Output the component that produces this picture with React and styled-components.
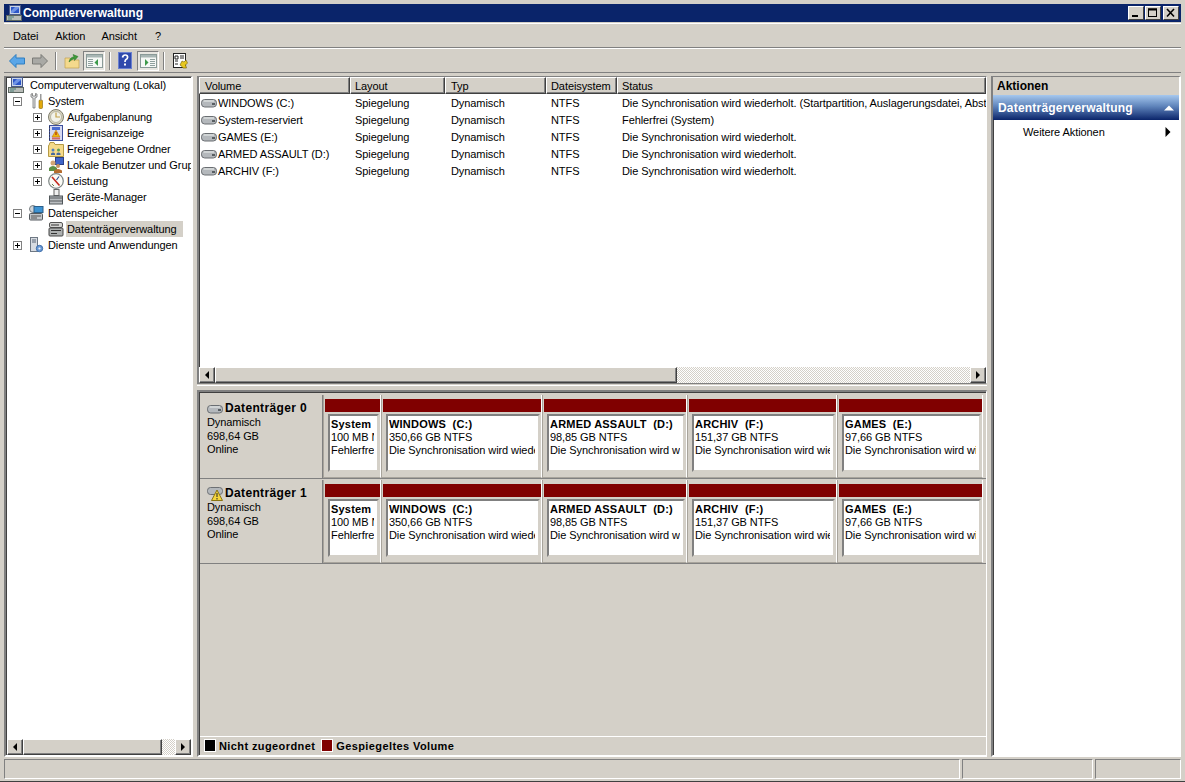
import React from 'react';
import styled, { createGlobalStyle } from 'styled-components';

const GlobalStyle = createGlobalStyle`
  html, body { margin: 0; padding: 0; background: #d4d0c8; }
  body { font-family: "Liberation Sans", Arial, sans-serif; font-size: 11px; letter-spacing: -0.08px; color: #000; }
`;

const gray = '#d4d0c8';

const Frame = styled.div`
  width: 1185px;
  height: 782px;
  box-sizing: border-box;
  padding: 4px 4px 2px;
  display: flex;
  flex-direction: column;
  background: ${gray};
  border-bottom: 1px solid #404040;
  overflow: hidden;
`;

const TitleBar = styled.div`
  height: 18px;
  flex: none;
  display: flex;
  align-items: center;
  padding: 0 2px;
  background: #0a246a;
  color: #fff;
  font-weight: bold;
  font-size: 12px;
  letter-spacing: 0;
  gap: 1px;
`;

const TitleText = styled.span`
  flex: 1;
`;

const WinButton = styled.button`
  width: 16px;
  height: 14px;
  padding: 0;
  margin-left: ${({ $gap }) => $gap || 0}px;
  border: 1px solid;
  border-color: #fff #404040 #404040 #fff;
  background: ${gray};
  display: flex;
  align-items: center;
  justify-content: center;
`;

const Bar = styled.div`
  height: ${({ $h }) => $h}px;
  flex: none;
  box-sizing: border-box;
  display: flex;
  align-items: center;
  border-top: 1px solid #fff;
  border-bottom: 1px solid #808080;
`;

const MenuBar = styled(Bar)`
  margin-top: 1px;
  padding-left: 1px;
`;

const MenuItem = styled.span`
  padding: 0 8px;
  margin-right: ${({ $mr }) => $mr || 0}px;
`;

const ToolBar = styled(Bar)`
  padding-left: 5px;
`;

const ToolButton = styled.div`
  width: ${({ $w }) => $w || 16}px;
  height: 20px;
  flex: none;
  display: flex;
  align-items: center;
  justify-content: center;
  margin-right: ${({ $mr }) => $mr || 0}px;
  box-sizing: border-box;
  ${({ $on }) => $on && `
    background: #e8e6e1;
    border: 1px solid;
    border-color: #808080 #fff #fff #808080;
  `}
`;

const ToolSep = styled.div`
  width: 2px;
  height: 18px;
  flex: none;
  margin: 0 ${({ $r }) => $r || 7}px 0 ${({ $l }) => $l || 7}px;
  border-left: 1px solid #808080;
  border-right: 1px solid #fff;
  box-sizing: border-box;
`;

const Main = styled.div`
  flex: 1;
  min-height: 0;
  display: flex;
  gap: 4px;
  margin-top: 3px;
`;

const Sunken = styled.div`
  box-sizing: border-box;
  border: 2px solid;
  border-top-width: 1px;
  border-color: #808080 #fff #fff #808080;
  box-shadow: inset 1px 1px 0 #404040;
`;

const TreePanel = styled(Sunken)`
  width: 189px;
  flex: none;
  background: #fff;
  display: flex;
  flex-direction: column;
  padding: 0 0 0 1px;
`;

const Tree = styled.div`
  flex: 1;
  min-height: 0;
  overflow: hidden;
`;

const TreeRow = styled.div`
  height: 16px;
  display: flex;
  align-items: center;
  white-space: nowrap;
  padding-left: ${({ $level }) => ($level === 0 ? 1 : $level === 1 ? 6 : 26)}px;
`;

const Expander = styled.span`
  width: 9px;
  height: 9px;
  flex: none;
  box-sizing: border-box;
  border: 1px solid #808080;
  background: #fff;
  display: flex;
  align-items: center;
  justify-content: center;
  margin-right: 6px;
  visibility: ${({ $hidden }) => ($hidden ? 'hidden' : 'visible')};
`;

const TreeIcon = styled.span`
  width: 16px;
  height: 16px;
  flex: none;
  display: block;
`;

const TreeLabel = styled.span`
  margin-left: ${({ $level }) => ($level === 0 ? 5 : $level === 1 ? 3 : 2)}px;
  padding: ${({ $selected }) => ($selected ? '0 6px 0 1px' : '0 2px 0 1px')};
  line-height: 16px;
  background: ${({ $selected }) => ($selected ? gray : 'transparent')};
`;

const ScrollBar = styled.div`
  height: 16px;
  flex: none;
  display: flex;
  background: repeating-conic-gradient(#fff 0 25%, ${gray} 0 50%) 0 0 / 2px 2px;
`;

const ScrollBtn = styled.div`
  width: ${({ $w }) => $w || 16}px;
  flex: none;
  box-sizing: border-box;
  background: ${gray};
  border: 1px solid;
  border-color: #fff #404040 #404040 #fff;
  box-shadow: inset -1px -1px 0 #808080;
  display: flex;
  align-items: center;
  justify-content: center;
`;

const ScrollGap = styled.div`
  flex: 1;
`;

const Center = styled.div`
  flex: 1;
  min-width: 0;
  display: flex;
  flex-direction: column;
  gap: 6px;
`;

const ListPane = styled(Sunken)`
  height: 308px;
  flex: none;
  background: #fff;
  display: flex;
  flex-direction: column;
  border-right-width: 1px;
  border-bottom: 1px solid #808080;
  box-shadow: inset 1px 1px 0 #404040, 0 1px 0 ${gray}, 0 2px 0 #fff;
`;

const ListHead = styled.div`
  height: 17px;
  flex: none;
  display: flex;
  background: ${gray};
`;

const HeadCell = styled.div`
  box-sizing: border-box;
  width: ${({ $w }) => $w}px;
  flex: ${({ $grow }) => ($grow ? 1 : 'none')};
  padding-left: ${({ $pl }) => $pl}px;
  line-height: 16px;
  border: 1px solid;
  border-color: #fff #404040 #404040 #fff;
  box-shadow: inset -1px -1px 0 #808080;
`;

const ListBody = styled.div`
  flex: 1;
  min-height: 0;
  overflow: hidden;
`;

const ListRow = styled.div`
  height: 17px;
  display: flex;
  align-items: center;
  white-space: nowrap;
`;

const ListCell = styled.div`
  width: ${({ $w }) => $w}px;
  flex: ${({ $grow }) => ($grow ? 1 : 'none')};
  min-width: 0;
  overflow: hidden;
  box-sizing: border-box;
  padding-left: ${({ $pl }) => $pl || 5}px;
  display: flex;
  align-items: center;
  gap: 1px;
`;

const DiskPane = styled(Sunken)`
  flex: 1;
  min-height: 0;
  background: ${gray};
  display: flex;
  flex-direction: column;
  padding: 3px 0 0 1px;
  border-top-width: 2px;
  border-right-width: 1px;
`;

const DiskRow = styled.div`
  height: 83px;
  flex: none;
  display: flex;
  margin-bottom: 1px;
  border-bottom: 1px solid #808080;
  box-sizing: content-box;
`;

const DiskLabel = styled.div`
  width: 123px;
  flex: none;
  box-sizing: border-box;
  padding: 7px 0 0 7px;
  border-right: 1px solid #808080;
  line-height: 13.5px;
`;

const DiskTitle = styled.div`
  display: flex;
  align-items: center;
  gap: 2px;
  height: 14px;
  font-weight: bold;
  font-size: 12px;
  letter-spacing: 0.35px;
`;

const DiskVolumes = styled.div`
  flex: 1;
  display: flex;
`;

const Volume = styled.div`
  width: ${({ $w }) => $w}px;
  flex: none;
  box-sizing: border-box;
  padding: 4px 0 5px 1px;
  display: flex;
  flex-direction: column;
  border-right: 1px solid #fff;
  border-left: 1px solid #a8a49c;
  border-bottom: 1px solid #a8a49c;
`;

const VolumeBar = styled.div`
  height: 13px;
  flex: none;
  background: #800000;
`;

const VolumeBody = styled.div`
  flex: 1;
  margin: 2px 1px 0 3px;
  box-sizing: border-box;
  background: #fff;
  border: 2px solid;
  border-color: #808080 #d4d0c8 #d4d0c8 #808080;
  padding: 2px 3px 0 1px;
`;

const VolumeText = styled.div`
  overflow: hidden;
  white-space: nowrap;
  line-height: 13px;
`;

const VolumeName = styled.div`
  font-weight: bold;
  letter-spacing: 0.2px;
  white-space: pre;
`;

const Legend = styled.div`
  margin-top: auto;
  height: 19px;
  flex: none;
  box-sizing: border-box;
  display: flex;
  align-items: center;
  padding: 0 0 1px 4px;
  font-weight: bold;
  letter-spacing: 0.4px;
  border-top: 1px solid #fff;
`;

const Swatch = styled.span`
  width: 12px;
  height: 13px;
  flex: none;
  box-sizing: border-box;
  background: ${({ $color }) => $color};
  border: 1px solid #fff;
  margin-right: 3px;
`;

const LegendText = styled.span`
  margin-right: 6px;
`;

const ActionsPanel = styled(Sunken)`
  width: 190px;
  flex: none;
  background: #fff;
  display: flex;
  flex-direction: column;
`;

const ActionsHead = styled.div`
  height: 18px;
  flex: none;
  background: ${gray};
  font-weight: bold;
  font-size: 12px;
  letter-spacing: 0;
  padding-left: 4px;
  box-sizing: border-box;
  line-height: 18px;
`;

const ActionsGroup = styled.div`
  height: 25px;
  flex: none;
  display: flex;
  align-items: center;
  justify-content: space-between;
  padding: 0 5px;
  background: linear-gradient(#a6c8ee, #5f84bb 45%, #0a246a);
  color: #fff;
  font-weight: bold;
  font-size: 12px;
  letter-spacing: 0.2px;
`;

const ActionItem = styled.div`
  height: 24px;
  flex: none;
  display: flex;
  align-items: center;
  justify-content: space-between;
  padding: 0 6px 0 30px;
`;

const StatusBar = styled.div`
  height: 20px;
  flex: none;
  margin-top: 2px;
  display: flex;
  gap: 2px;
`;

const StatusCell = styled.div`
  width: ${({ $w }) => $w}px;
  flex: ${({ $grow }) => ($grow ? 1 : 'none')};
  box-sizing: border-box;
  border: 1px solid;
  border-color: #808080 #fff #fff #808080;
`;

const Arrow = ({ dir = 'right', size = 4, color = '#000' }) => (
  <svg width={size * 2} height={size * 2} viewBox="0 0 8 8">
    {dir === 'right' && <path d="M2 0L6 4L2 8Z" fill={color} />}
    {dir === 'left' && <path d="M6 0L2 4L6 8Z" fill={color} />}
    {dir === 'up' && <path d="M0 6L4 2L8 6Z" fill={color} />}
  </svg>
);

const Plus = ({ minus }) => (
  <svg width="7" height="7" viewBox="0 0 7 7">
    <path d="M1 3.5H6" stroke="#000" />
    {!minus && <path d="M3.5 1V6" stroke="#000" />}
  </svg>
);

const DriveIcon = () => (
  <svg width="16" height="10" viewBox="0 0 16 10">
    <rect x="0.5" y="1.5" width="15" height="7.5" rx="3.2" fill="#b4b8bc" stroke="#6a6e72" />
    <path d="M2.5 3H13" stroke="#ecf0ee" />
    <rect x="11" y="5" width="3" height="2" fill="#585e62" />
  </svg>
);

const ComputerIcon = () => (
  <svg width="16" height="16" viewBox="0 0 16 16">
    <rect x="3.5" y="0.5" width="11" height="9" fill="#c8d4e8" stroke="#4a5a88" />
    <rect x="5" y="2" width="8" height="6" fill="#2b55c8" />
    <path d="M5 6L9 2H13V3L7 8H5Z" fill="#6f93e4" />
    <rect x="0.5" y="10.5" width="15" height="5" fill="#b8bcb8" stroke="#5c6660" />
    <path d="M2 12H8M2 14H6" stroke="#4b7f78" />
  </svg>
);

const ToolsIcon = () => (
  <svg width="16" height="16" viewBox="0 0 16 16">
    <path d="M3 1V4L5 5V15H7V5L9 4V1L7.5 0.5V3H4.5V0.5Z" fill="#e0e2e4" stroke="#666" strokeWidth="0.7" />
    <rect x="11" y="7" width="3.5" height="8.5" rx="1" fill="#e2a90c" stroke="#8a6400" strokeWidth="0.6" />
    <rect x="12" y="1" width="1.5" height="6.5" fill="#9a9a9a" />
  </svg>
);

const ClockIcon = () => (
  <svg width="16" height="16" viewBox="0 0 16 16">
    <circle cx="8" cy="8" r="7.5" fill="#d9d4bf" stroke="#7f7d6c" />
    <circle cx="8" cy="8" r="5.5" fill="#f2f2ea" stroke="#b9b6a3" />
    <path d="M8 3.5V8H12" fill="none" stroke="#c4a24a" strokeWidth="1.2" />
  </svg>
);

const EventIcon = () => (
  <svg width="16" height="16" viewBox="0 0 16 16">
    <rect x="1.5" y="0.5" width="13" height="15" fill="#d6d9f0" stroke="#3d4f9c" />
    <path d="M2 2H1M2 5H1M2 8H1M2 11H1M2 14H1" stroke="#222" />
    <rect x="4" y="2" width="8" height="3" fill="#4a6bd0" />
    <path d="M8 5L12 12H4Z" fill="#eeb810" stroke="#b56a10" strokeWidth="0.5" />
    <path d="M8 7V10" stroke="#a01010" />
    <rect x="4" y="12.5" width="8" height="2" fill="#d06a6a" />
  </svg>
);

const SharedFolderIcon = () => (
  <svg width="16" height="16" viewBox="0 0 16 16">
    <path d="M0.5 4.5V15.5H15.5V3.5H7L6 1.5H2L1 4.5Z" fill="#f5da8a" stroke="#b59a45" />
    <circle cx="5" cy="9" r="1.5" fill="#4f7fbf" />
    <circle cx="10.5" cy="9" r="1.5" fill="#5a9c52" />
    <path d="M3 14V12.5Q5 10.5 7 12.5V14ZM8.5 14V12.5Q10.5 10.5 12.5 12.5V14Z" fill="#46699e" />
  </svg>
);

const UsersIcon = () => (
  <svg width="16" height="16" viewBox="0 0 16 16">
    <rect x="7.5" y="0.5" width="8" height="7" fill="#3f64c8" stroke="#2a3e86" />
    <circle cx="5" cy="6" r="2.5" fill="#d2a675" />
    <path d="M1 14V11Q5 7 9 11V14Z" fill="#5c8f45" />
    <circle cx="10" cy="9" r="2" fill="#c49463" />
    <path d="M6 16V13.5Q10 10.5 14 13.5V16Z" fill="#b56d2f" />
  </svg>
);

const GaugeIcon = () => (
  <svg width="16" height="16" viewBox="0 0 16 16">
    <circle cx="8" cy="8" r="7.3" fill="#fbfbf6" stroke="#7d8584" strokeWidth="1.2" />
    <path d="M4 4L11.5 12.5" stroke="#c4281c" strokeWidth="1.6" />
    <path d="M11 3.5L8.5 7" stroke="#2f4f8f" strokeWidth="1.2" />
    <path d="M4 11L6 13" stroke="#6b7b4a" />
  </svg>
);

const DeviceIcon = () => (
  <svg width="16" height="16" viewBox="0 0 16 16">
    <rect x="6" y="0.5" width="5" height="6" fill="#f0f0f0" stroke="#676767" />
    <rect x="1.5" y="7" width="13" height="8" fill="#b9bdc0" stroke="#50565a" />
    <path d="M2 9H14M2 12H14" stroke="#54595d" />
  </svg>
);

const StorageIcon = () => (
  <svg width="16" height="16" viewBox="0 0 16 16">
    <circle cx="5" cy="4" r="3.5" fill="#cfd4d8" stroke="#7a8084" />
    <rect x="6" y="1.5" width="9" height="6" fill="#3e93d2" stroke="#2a5f8a" />
    <rect x="1.5" y="8.5" width="13" height="6.5" rx="1" fill="#c2c6ca" stroke="#565b60" />
    <path d="M3 11H13M3 13H9" stroke="#545454" />
  </svg>
);

const DiskMgmtIcon = () => (
  <svg width="16" height="16" viewBox="0 0 16 16">
    <rect x="1.5" y="1.5" width="13" height="5" rx="1.5" fill="#d4d4d2" stroke="#545454" />
    <rect x="1" y="7" width="14" height="8" rx="1" fill="#adb0b0" stroke="#454545" />
    <path d="M3 4H11M3 9.5H13M3 12.5H9" stroke="#333" />
  </svg>
);

const ServicesIcon = () => (
  <svg width="16" height="16" viewBox="0 0 16 16">
    <rect x="2.5" y="0.5" width="7" height="14" fill="#d8dce2" stroke="#6e7884" />
    <path d="M4 3H8M4 5H8" stroke="#5a6676" />
    <circle cx="11.5" cy="11.5" r="3.2" fill="#6a9ad6" stroke="#3f6da8" />
    <circle cx="11.5" cy="11.5" r="1.1" fill="#eef4fb" />
  </svg>
);

const NavArrow = ({ back, fill, stroke }) => (
  <svg width="16" height="14" viewBox="0 0 16 14">
    <path
      d={back ? 'M0.5 7L7 0.5V4H15.5V10H7V13.5Z' : 'M15.5 7L9 0.5V4H0.5V10H9V13.5Z'}
      fill={fill}
      stroke={stroke}
    />
  </svg>
);

const UpFolderIcon = () => (
  <svg width="16" height="16" viewBox="0 0 16 16">
    <path d="M1 5H6L7 7H15V15H1Z" fill="#f4d98c" stroke="#c0a050" strokeWidth="0.7" />
    <path d="M5 9Q6 4 10 4L9 1.5L14 3.5L10.5 7.5V5.5Q8 6 5 9Z" fill="#3e9b3a" stroke="#277025" strokeWidth="0.5" />
  </svg>
);

const PaneIcon = ({ right }) => (
  <svg width="17" height="14" viewBox="0 0 17 14">
    <rect x="0.5" y="0.5" width="16" height="13" fill="#f6f8f6" stroke="#8a9a98" />
    <rect x="1" y="1" width="15" height="2.5" fill="#a8b6b4" />
    <path
      d={right
        ? 'M10 5.5H15M10 7.5H15M10 9.5H15M10 11.5H15'
        : 'M2 5.5H7M2 7.5H7M2 9.5H7M2 11.5H7'}
      stroke="#8fa09e"
    />
    <path d={right ? 'M5 5L8.5 8.5L5 12Z' : 'M12 5L8.5 8.5L12 12Z'} fill="#3d9a4a" />
  </svg>
);

const HelpIcon = () => (
  <svg width="14" height="17" viewBox="0 0 14 17">
    <rect width="14" height="17" fill="#2f49ac" />
    <rect x="0.5" y="0.5" width="13" height="16" fill="none" stroke="#6a80d0" />
    <path d="M4.5 5.5Q5 3 7.2 3Q9.6 3 9.6 5.2Q9.6 6.8 8 7.6Q7 8.2 7 10" fill="none" stroke="#fff" strokeWidth="1.7" />
    <rect x="6" y="11.5" width="2" height="2" fill="#fff" />
  </svg>
);

const PropsIcon = () => (
  <svg width="16" height="16" viewBox="0 0 16 16">
    <rect x="1.5" y="0.5" width="12" height="14" fill="#fff" stroke="#222" />
    <path d="M3 3H6V6H3ZM8 3H12M8 5H12M3 8H6M3 11H6" fill="none" stroke="#222" />
    <path d="M8 12L10 8L12 9L14 7L15.5 10L13.5 12L14.5 15H11L10 13.5Z" fill="#e8c820" stroke="#6e5a00" strokeWidth="0.6" />
  </svg>
);

const WarnDrive = () => (
  <svg width="16" height="14" viewBox="0 0 16 14">
    <rect x="0.5" y="0.5" width="15" height="7" rx="3" fill="#b4b8bc" stroke="#6d7074" />
    <path d="M10 3L15.5 13.5H4.5Z" fill="#f5d63c" stroke="#8a7410" />
    <path d="M10 6V10M10 11V12.5" stroke="#222" />
  </svg>
);

const treeItems = [
  { level: 0, label: 'Computerverwaltung (Lokal)', icon: <ComputerIcon /> },
  { level: 1, label: 'System', icon: <ToolsIcon />, exp: 'minus' },
  { level: 2, label: 'Aufgabenplanung', icon: <ClockIcon />, exp: 'plus' },
  { level: 2, label: 'Ereignisanzeige', icon: <EventIcon />, exp: 'plus' },
  { level: 2, label: 'Freigegebene Ordner', icon: <SharedFolderIcon />, exp: 'plus' },
  { level: 2, label: 'Lokale Benutzer und Gruppen', icon: <UsersIcon />, exp: 'plus' },
  { level: 2, label: 'Leistung', icon: <GaugeIcon />, exp: 'plus' },
  { level: 2, label: 'Geräte-Manager', icon: <DeviceIcon /> },
  { level: 1, label: 'Datenspeicher', icon: <StorageIcon />, exp: 'minus' },
  { level: 2, label: 'Datenträgerverwaltung', icon: <DiskMgmtIcon />, selected: true },
  { level: 1, label: 'Dienste und Anwendungen', icon: <ServicesIcon />, exp: 'plus' },
];

const columns = [151, 95, 101, 71];
const headers = [
  { text: 'Volume', pl: 5 },
  { text: 'Layout', pl: 4 },
  { text: 'Typ', pl: 5 },
  { text: 'Dateisystem', pl: 4 },
  { text: 'Status', pl: 4 },
];
const syncing = 'Die Synchronisation wird wiederholt.';
const rows = [
  ['WINDOWS (C:)', `${syncing} (Startpartition, Auslagerungsdatei, Absturzabbild)`],
  ['System-reserviert', 'Fehlerfrei (System)'],
  ['GAMES (E:)', syncing],
  ['ARMED ASSAULT (D:)', syncing],
  ['ARCHIV (F:)', syncing],
];

const volumes = [
  { w: 58, name: 'System', size: '100 MB NTFS', status: 'Fehlerfrei (System)' },
  { w: 161, name: 'WINDOWS  (C:)', size: '350,66 GB NTFS', status: 'Die Synchronisation wird wiederholt' },
  { w: 145, name: 'ARMED ASSAULT  (D:)', size: '98,85 GB NTFS', status: 'Die Synchronisation wird wiederholt' },
  { w: 150, name: 'ARCHIV  (F:)', size: '151,37 GB NTFS', status: 'Die Synchronisation wird wiederholt' },
  { w: 146, name: 'GAMES  (E:)', size: '97,66 GB NTFS', status: 'Die Synchronisation wird wiederholt' },
];

const Disk = ({ index, warn }) => (
  <DiskRow>
    <DiskLabel>
      <DiskTitle>
        {warn ? <WarnDrive /> : <DriveIcon />}
        Datenträger {index}
      </DiskTitle>
      <div>Dynamisch</div>
      <div>698,64 GB</div>
      <div>Online</div>
    </DiskLabel>
    <DiskVolumes>
      {volumes.map((v) => (
        <Volume key={v.name} $w={v.w}>
          <VolumeBar />
          <VolumeBody>
            <VolumeText>
              <VolumeName>{v.name}</VolumeName>
              <div>{v.size}</div>
              <div>{v.status}</div>
            </VolumeText>
          </VolumeBody>
        </Volume>
      ))}
    </DiskVolumes>
  </DiskRow>
);

export default function App() {
  return (
    <>
      <GlobalStyle />
      <Frame>
        <TitleBar>
          <ComputerIcon />
          <TitleText>Computerverwaltung</TitleText>
          <WinButton>
            <svg width="10" height="10" viewBox="0 0 10 10"><rect x="1" y="7" width="6" height="2" /></svg>
          </WinButton>
          <WinButton>
            <svg width="10" height="10" viewBox="0 0 10 10"><rect x="0.5" y="1" width="8" height="7.5" fill="none" stroke="#000" /><rect x="0" y="0.5" width="9" height="2" /></svg>
          </WinButton>
          <WinButton $gap={1}>
            <svg width="10" height="10" viewBox="0 0 10 10"><path d="M1 1L8 8.5M8 1L1 8.5" stroke="#000" strokeWidth="1.6" /></svg>
          </WinButton>
        </TitleBar>

        <MenuBar $h={25}>
          <MenuItem $mr={1}>Datei</MenuItem>
          <MenuItem>Aktion</MenuItem>
          <MenuItem $mr={2}>Ansicht</MenuItem>
          <MenuItem>?</MenuItem>
        </MenuBar>

        <ToolBar $h={25}>
          <ToolButton $mr={7}><NavArrow back fill="#5aa6e8" stroke="#2f7ec0" /></ToolButton>
          <ToolButton><NavArrow fill="#a9a9a5" stroke="#7a7a76" /></ToolButton>
          <ToolSep $l={7} $r={7} />
          <ToolButton $mr={3}><UpFolderIcon /></ToolButton>
          <ToolButton $on $w={22}><PaneIcon /></ToolButton>
          <ToolSep $l={4} $r={7} />
          <ToolButton $w={14} $mr={5}><HelpIcon /></ToolButton>
          <ToolButton $on $w={22}><PaneIcon right /></ToolButton>
          <ToolSep $l={4} $r={7} />
          <ToolButton><PropsIcon /></ToolButton>
        </ToolBar>

        <Main>
          <TreePanel>
            <Tree>
              {treeItems.map((item) => (
                <TreeRow key={item.label} $level={item.level}>
                  {item.level > 0 && (
                    <Expander $hidden={!item.exp}>
                      {item.exp && <Plus minus={item.exp === 'minus'} />}
                    </Expander>
                  )}
                  <TreeIcon>{item.icon}</TreeIcon>
                  <TreeLabel $level={item.level} $selected={item.selected}>{item.label}</TreeLabel>
                </TreeRow>
              ))}
            </Tree>
            <ScrollBar>
              <ScrollBtn><Arrow dir="left" /></ScrollBtn>
              <ScrollBtn $w={139} />
              <ScrollGap />
              <ScrollBtn><Arrow /></ScrollBtn>
            </ScrollBar>
          </TreePanel>

          <Center>
            <ListPane>
              <ListHead>
                {headers.map((h, i) => (
                  <HeadCell key={h.text} $w={columns[i]} $pl={h.pl} $grow={i === 4}>{h.text}</HeadCell>
                ))}
              </ListHead>
              <ListBody>
                {rows.map(([name, status]) => (
                  <ListRow key={name}>
                    <ListCell $w={columns[0]} $pl={2}><DriveIcon />{name}</ListCell>
                    <ListCell $w={columns[1]}>Spiegelung</ListCell>
                    <ListCell $w={columns[2]} $pl={6}>Dynamisch</ListCell>
                    <ListCell $w={columns[3]}>NTFS</ListCell>
                    <ListCell $grow>{status}</ListCell>
                  </ListRow>
                ))}
              </ListBody>
              <ScrollBar>
                <ScrollBtn><Arrow dir="left" /></ScrollBtn>
                <ScrollBtn $w={462} />
                <ScrollGap />
                <ScrollBtn><Arrow /></ScrollBtn>
              </ScrollBar>
            </ListPane>

            <DiskPane>
              <Disk index={0} />
              <Disk index={1} warn />
              <Legend>
                <Swatch $color="#000" />
                <LegendText>Nicht zugeordnet</LegendText>
                <Swatch $color="#800000" />
                <LegendText>Gespiegeltes Volume</LegendText>
              </Legend>
            </DiskPane>
          </Center>

          <ActionsPanel>
            <ActionsHead>Aktionen</ActionsHead>
            <ActionsGroup>
              Datenträgerverwaltung
              <Arrow dir="up" size={5} color="#fff" />
            </ActionsGroup>
            <ActionItem>
              Weitere Aktionen
              <Arrow size={5} />
            </ActionItem>
          </ActionsPanel>
        </Main>

        <StatusBar>
          <StatusCell $grow />
          <StatusCell $w={131} />
          <StatusCell $w={86} />
        </StatusBar>
      </Frame>
    </>
  );
}
